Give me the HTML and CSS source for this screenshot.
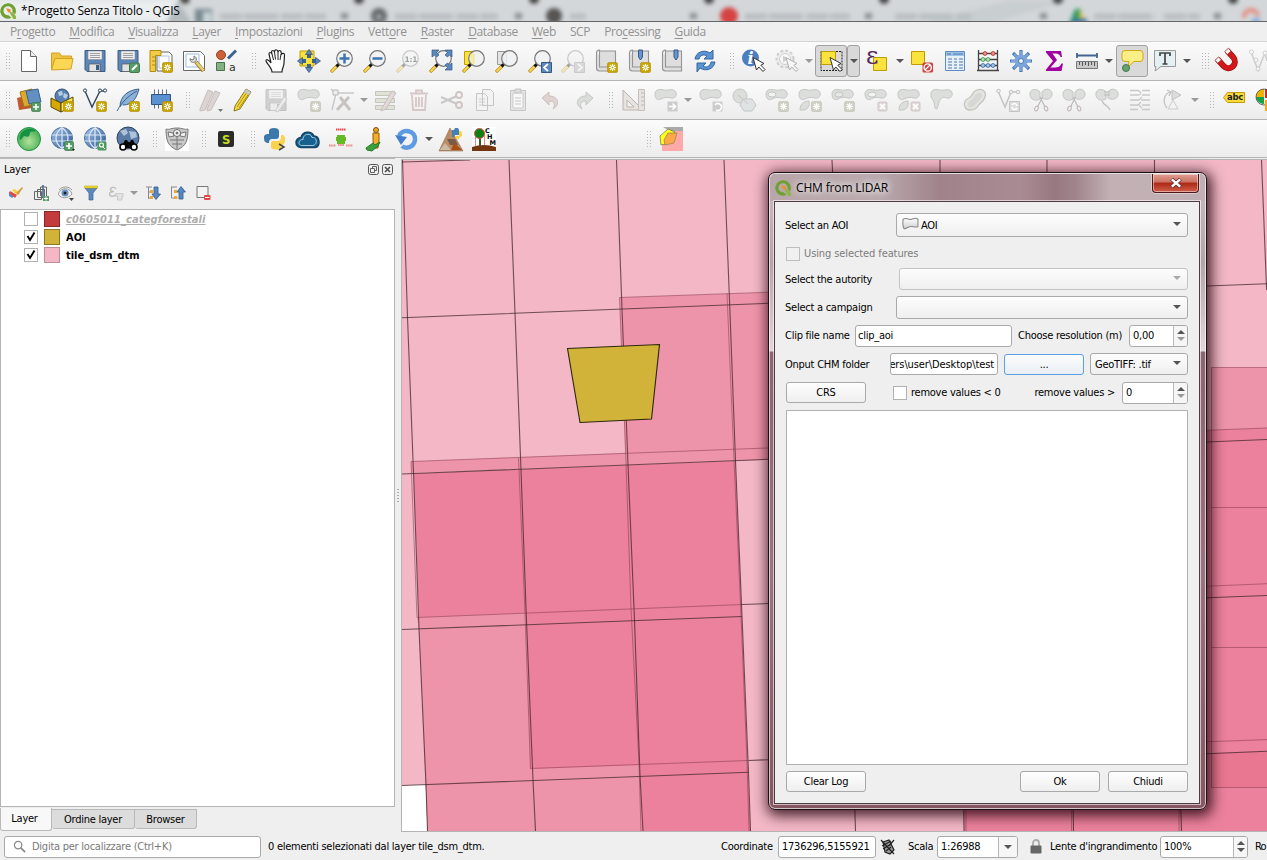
FILE: index.html
```html
<!DOCTYPE html>
<html lang="it">
<head>
<meta charset="utf-8">
<title>*Progetto Senza Titolo - QGIS</title>
<link rel="stylesheet" href="styles.css">
</head>
<body>
<svg class="defs" width="0" height="0">
  <defs>
    <linearGradient id="gsteel" x1="0" y1="0" x2="0" y2="1"><stop offset="0" stop-color="#fff"/><stop offset="1" stop-color="#cdd0d2"/></linearGradient>
    <linearGradient id="gglobe" x1="0" y1="0" x2="1" y2="1"><stop offset="0" stop-color="#a9c8ee"/><stop offset="1" stop-color="#28548e"/></linearGradient>
    <radialGradient id="gball" cx=".5" cy=".6"><stop offset="0" stop-color="#b2e29a"/><stop offset="1" stop-color="#54b35c"/></radialGradient>
    <symbol id="star" viewBox="0 0 24 24"><rect x="13.5" y="13.5" width="10" height="10" rx="1.5" fill="#caa400" stroke="#b08c00" stroke-width=".6"/><path d="M18.5 15v7M15 18.5h7M16 16l5 5M21 16l-5 5" stroke="#fff" stroke-width="1.1"/><circle cx="18.5" cy="18.5" r=".9" fill="#caa400"/></symbol>
    <symbol id="gstar" viewBox="0 0 24 24"><rect x="13.5" y="13.5" width="10" height="10" rx="1.5" fill="#d0cfc4" stroke="#c2c1b6" stroke-width=".6"/><path d="M18.5 15v7M15 18.5h7M16 16l5 5M21 16l-5 5" stroke="#fff" stroke-width="1.1"/></symbol>
    <symbol id="gx" viewBox="0 0 24 24"><rect x="14" y="14" width="9" height="9" rx="1" fill="#ddd4d4" stroke="#d2caca"/><path d="M16 16l5 5M21 16l-5 5" stroke="#fff" stroke-width="2"/></symbol>
    <symbol id="plus" viewBox="0 0 24 24"><rect x="14.5" y="14.5" width="9" height="9" rx="1.5" fill="#5a9c68" stroke="#3f7a4c" stroke-width=".7"/><path d="M19 16v6M16 19h6" stroke="#fff" stroke-width="1.6"/></symbol>
    <symbol id="lens" viewBox="0 0 24 24"><path d="M1 23l6.500-6.500" stroke="#b18716" stroke-width="3.200"/><path d="M1.500 22.500l5.500-5.500" stroke="#ffd74a" stroke-width="1.800"/><path d="M6.500 17.500l2.500-2.500" stroke="#111" stroke-width="3"/><circle cx="14.500" cy="9.500" r="7.800" fill="#eef1f2" fill-opacity=".85" stroke="#777" stroke-width="1.200"/></symbol>
    <symbol id="cursor" viewBox="0 0 24 24"><path d="M11 8.500l3.500 12.500 2.300-3 4.200 4.500 2-2-4.200-4.300 3.200-1.700z" fill="#fff" stroke="#333" stroke-width="1"/></symbol>
    <symbol id="blob" viewBox="0 0 24 24"><path d="M1 6C1 1 6 1 10 2s8-2 11 1c3 4 0 8-4 7s-6-1-10 1-6-1-6-5z" fill="#dcdedb" stroke="#c5c7c4"/></symbol>
    <symbol id="globe" viewBox="0 0 24 24"><circle cx="12" cy="11" r="10.500" fill="url(#gglobe)" stroke="#4c6f9c"/><path d="M2 8h20M2 14h20M12 .5v21M12 .5c-8 6-8 15 0 21M12 .5c8 6 8 15 0 21" fill="none" stroke="#dce9f7" stroke-width="1.200"/></symbol>
    <symbol id="flop" viewBox="0 0 24 24"><path d="M2 1.500h20v21H4l-2-2z" fill="#5d86b8" stroke="#3a5b85"/><path d="M5 2h14v8.500H5z" fill="#eee" stroke="#888" stroke-width=".5"/><path d="M7 4.500h10M7 6.500h10M7 8.500h10" stroke="#8a8a8a" stroke-width=".8"/><path d="M6 15h11v7.500H6z" fill="#e2e2e2" stroke="#555" stroke-width=".7"/><path d="M13 16h3v5h-3z" fill="#3a5b85"/></symbol>
    <symbol id="book" viewBox="0 0 24 24"><path d="M2.500 4c0-3 3-3 3-3v17h16V2H5.500M2.500 4v15c0 3 2 3 3 3h16v-4" fill="#dedede" stroke="#949494" stroke-width="1.100"/></symbol>
    <symbol id="scis" viewBox="0 0 24 24"><path d="M1 5c1-5 8-4 10-1v7c-5 3-11 0-10-6zM13 4c3-5 11-3 10 3-1 5-7 5-10 3z" fill="#dcdedb" stroke="#c5c7c4"/><path d="M13.500 9l-5 10M11 9l5 10" stroke="#bbb" stroke-width="1.200"/><ellipse cx="7.500" cy="20.500" rx="1.600" ry="2.500" transform="rotate(25 7.500 20.500)" fill="none" stroke="#bfb2b2"/><ellipse cx="17" cy="20.500" rx="1.600" ry="2.500" transform="rotate(-25 17 20.500)" fill="none" stroke="#bfb2b2"/></symbol>
    <symbol id="qlogo" viewBox="0 0 24 24"><path d="M12 .5a11.500 11.500 0 1 0 5 21.800l-4-4a6.800 6.800 0 1 1 5.600-5l4 4A11.500 11.500 0 0 0 12 .5z" fill="#6fa032"/><path d="M14 14h5l5 6v4h-4z" fill="#8cb73f"/><path d="M9 8l7 1.500v5L12 14z" fill="#ee8f2f"/></symbol>
  </defs>
</svg>

<div class="app">
  <header class="titlebar">
    <svg class="behind" viewBox="0 0 1267 21" preserveAspectRatio="none">
      <g class="soft">
        <path d="M185 0h335l8 3h10l8-3h721v24H175z" fill="#d3d7da"/>
        <path d="M920 24l90-24h60L990 24z" fill="#c9ced1"/>
        <path d="M178 0l14 24H166z" fill="#b4babd"/>
        <rect x="195" y="9" width="17" height="14" fill="#78898f"/><rect x="203" y="12" width="8" height="11" fill="#c9d6da"/>
        <path d="M220 16.500h106M395 16.500h103M570 16.500h16M745 16.500h105M895 16.500h76M1094 16.500h62M1164 16.500h36" stroke="#b9bec1" stroke-width="6" stroke-dasharray="22 2 34 3"/>
        <path d="M341 16h7M515 16h7M690 16h7M865 16h7M1040 16h7M1214 16h7" stroke="#8b8f91" stroke-width="6"/>
        <g fill="#444"><circle cx="185" cy="-1" r="5"/><circle cx="359" cy="-1" r="5"/><circle cx="534" cy="-1" r="5"/><circle cx="709" cy="-1" r="5"/><circle cx="884" cy="-1" r="5"/><circle cx="1058" cy="-1" r="5"/><circle cx="1233" cy="-1" r="5"/></g>
        <circle cx="379" cy="16" r="8" fill="#626769"/><circle cx="379" cy="17" r="3" fill="#aaa"/>
        <circle cx="554" cy="16" r="8" fill="#575454"/><circle cx="729" cy="16" r="9" fill="#d64343"/>
        <path d="M1069 24l6-15h6v15z" fill="#2d9a62"/><path d="M1079 9l9 15h-9z" fill="#d9b93e"/><path d="M1072 19h15v5h-15z" fill="#3d74b5"/>
        <path d="M1244 18a7 7 0 0 1 14-2" fill="none" stroke="#e6897b" stroke-width="4"/><path d="M1252 21h8" stroke="#7fa6dd" stroke-width="5"/>
      </g>
    </svg>
    <svg class="appicon" viewBox="0 0 24 24"><use href="#qlogo"/></svg>
    <span class="wtitle">*Progetto Senza Titolo - QGIS</span>
  </header>

  <nav class="menubar">
    <span>P<u>r</u>ogetto</span><span><u>M</u>odifica</span><span><u>V</u>isualizza</span><span><u>L</u>ayer</span><span><u>I</u>mpostazioni</span><span><u>P</u>lugins</span><span>Vett<u>o</u>re</span><span><u>R</u>aster</span><span><u>D</u>atabase</span><span><u>W</u>eb</span><span>SCP</span><span>Pro<u>c</u>essing</span><span><u>G</u>uida</span>
  </nav>

  <div class="toolbar">
    <i class="grip first"></i>
    <b class="ic"><svg viewBox="0 0 24 24"><path d="M4.500 1.500h9l6 6v15h-15z" fill="#fff" stroke="#666"/><path d="M13.500 1.500v6h6" fill="#eee" stroke="#666"/></svg></b>
    <b class="ic"><svg viewBox="0 0 24 24"><path d="M1.500 20V4h8l2 3h10v5" fill="#eec343" stroke="#d2a21f"/><path d="M1.500 21L5 9.500h18L21 20z" fill="#fcd756" stroke="#d2a21f"/></svg></b>
    <b class="ic"><svg viewBox="0 0 24 24"><use href="#flop"/></svg></b>
    <b class="ic"><svg viewBox="0 0 24 24"><use href="#flop"/><rect x="13.500" y="14" width="10" height="9.500" rx="1.500" fill="#5a9c68" stroke="#3f7a4c"/><path d="M16 21l5-5" stroke="#fff" stroke-width="2"/></svg></b>
    <b class="ic"><svg viewBox="0 0 24 24"><path d="M8 3h12l3 3v16H8z" fill="#fff" stroke="#666"/><path d="M10 7h10v12H10z" fill="none" stroke="#aac3e0"/><path d="M1 1.500h11v5H6.500v16H1z" fill="#f2cb42" stroke="#b18b12"/><path d="M3 8h3M3 12h3M3 16h3" stroke="#b18b12"/><use href="#star"/></svg></b>
    <b class="ic"><svg viewBox="0 0 24 24"><path d="M1.500 2.500h17l4 4v15h-21z" fill="#fff" stroke="#666"/><path d="M4 5h13v13H4z" fill="none" stroke="#9dbbe4"/><path d="M8 9.500c0 4 3 4.500 5 3.500s2-5-1-6v3l-2 1z" fill="#ddd" stroke="#777"/><path d="M14 13l7.500 9" stroke="#987c36" stroke-width="4"/><path d="M14.500 13.500l7 8" stroke="#e9d275" stroke-width="2.500"/></svg></b>
    <b class="ic"><svg viewBox="0 0 24 24"><circle cx="6" cy="6" r="4.500" fill="#cb6239" stroke="#9c441f"/><path d="M1.500 13.500h8v8h-8z" fill="#84b084" stroke="#46734a"/><path d="M13 9.500l8-8" stroke="#3e638f" stroke-width="3"/><text x="14" y="22" class="glyph-a">a</text></svg></b>
    <i class="grip"></i>
    <b class="ic"><svg viewBox="0 0 24 24"><path d="M8 23c0-4-5-8-6-11 0-2 2-2 5 2L5 5c0-2 2-2 3 0L7.500 3c0-2 2.500-2 3 0 0-3 3-3 3.500 0 .5-2 3-2 3 0l.5 2c1-1 3-1 3 1l-.5 8c0 4-2 5-2 9z" fill="#fff" stroke="#222" stroke-width="1.200"/><path d="M8 5l1.500 6M10.500 3l1 7.500M14 3v8M17 5l-1 6" stroke="#222" fill="none"/></svg></b>
    <b class="ic"><svg viewBox="0 0 24 24"><path d="M3 2h14v15H3z" fill="#f9e13b" stroke="#c19c00"/><path d="M12 3.500v17M3.500 12h17" stroke="#3f6391" stroke-width="4"/><path d="M12 .5l3.500 5h-7zM12 23.500l3.500-5h-7zM.5 12l5-3.500v7zM23.500 12l-5-3.500v7z" fill="#5b88bd" stroke="#36587f" stroke-width=".8"/><path d="M9 9h6v6H9z" fill="#f9e13b"/></svg></b>
    <b class="ic"><svg viewBox="0 0 24 24"><use href="#lens"/><path d="M14.500 4.500v10M9.500 9.500h10" stroke="#3f73b1" stroke-width="2.500"/></svg></b>
    <b class="ic"><svg viewBox="0 0 24 24"><use href="#lens"/><path d="M9.500 9.500h10" stroke="#3f73b1" stroke-width="2.500"/></svg></b>
    <b class="ic dim"><svg viewBox="0 0 24 24"><use href="#lens"/><text x="8.500" y="12.500" class="glyph-one">1:1</text></svg></b>
    <b class="ic"><svg viewBox="0 0 24 24"><use href="#lens"/><path d="M3 1h7L7.500 3.500 10 6 7.500 8 5.500 6 3 8zM23 1h-7l2.500 2.500L16 6l2.500 2 2-2L23 8zM23 21h-7l2.500-2.500L16 16l2.500-2 2 2 2.500-2z" fill="#5b88bd" stroke="#36587f" stroke-width=".7"/></svg></b>
    <b class="ic"><svg viewBox="0 0 24 24"><path d="M2.500 2.500h9v13h-9z" fill="#fbe23c" stroke="#c19c00"/><use href="#lens"/><path d="M8 5h5v10H10z" fill="#f5ea9b" opacity=".8"/></svg></b>
    <b class="ic"><svg viewBox="0 0 24 24"><path d="M2.500 2.500h9v13h-9z" fill="#e4e4e4" stroke="#999"/><use href="#lens"/></svg></b>
    <b class="ic"><svg viewBox="0 0 24 24"><use href="#lens"/><path d="M13.500 13.500h10v10h-10z" fill="#5b88bd" stroke="#36587f"/><path d="M20 15l-4 3.500 4 3.500" fill="none" stroke="#fff" stroke-width="1.800"/></svg></b>
    <b class="ic dim"><svg viewBox="0 0 24 24"><use href="#lens"/><path d="M13.500 13.500h10v10h-10z" fill="#aaa" stroke="#888"/><path d="M17 15l4 3.500-4 3.500" fill="none" stroke="#fff" stroke-width="1.800"/></svg></b>
    <b class="ic"><svg viewBox="0 0 24 24"><use href="#book"/><use href="#star"/></svg></b>
    <b class="ic"><svg viewBox="0 0 24 24"><use href="#book"/><path d="M11.500 1h4v7l-2 3-2-3z" fill="#6695cf" stroke="#3a5b85"/><use href="#star"/></svg></b>
    <b class="ic"><svg viewBox="0 0 24 24"><use href="#book"/><path d="M14 1h4v7l-2 3-2-3z" fill="#6695cf" stroke="#3a5b85"/></svg></b>
    <b class="ic"><svg viewBox="0 0 24 24"><path d="M2 10C3 3 11 0 17 4l3-3v9h-9l3-3C11 5 7 6 6 10zM22 13c-1 7-9 10-15 6l-3 4v-9h9l-3 3c3 2 7 1 8-4z" fill="#5c94d3" stroke="#3465a0"/></svg></b>
    <i class="grip g16"></i>
    <b class="ic"><svg viewBox="0 0 24 24"><circle cx="8.500" cy="9" r="8.500" fill="#4b7fc0"/><text x="5.500" y="15" class="glyph-i">i</text><use href="#cursor"/></svg></b>
    <b class="ic dim"><svg viewBox="0 0 24 24"><circle cx="10" cy="10" r="8.500" fill="#e2e2e2" stroke="#888" stroke-width="2" stroke-dasharray="3 2"/><circle cx="10" cy="10" r="5.500" fill="#fff" stroke="#888"/><path d="M8 6.500l5 3.500-5 3.500z" fill="#888"/><use href="#cursor"/></svg></b>
    <i class="arr dimarr"></i>
    <b class="ic pressed"><svg viewBox="0 0 24 24"><path d="M2 2.500h21v19H2z" fill="none" stroke="#222" stroke-dasharray="2 1"/><path d="M2.500 2.500h14v13h-14z" fill="#fbe23c" stroke="#c19c00"/><use href="#cursor"/></svg></b><i class="arr pressedarr"></i>
    <b class="ic w35"><svg viewBox="0 0 24 24"><path d="M7.500 8.500h13v13h-13z" fill="#fbe23c" stroke="#c19c00"/><text x="0" y="15" class="glyph-eps">ε</text></svg></b>
    <i class="arr a10"></i>
    <b class="ic"><svg viewBox="0 0 24 24"><path d="M1.500 2.500h13v13h-13z" fill="#fbe23c" stroke="#c19c00"/><rect x="12.500" y="13.500" width="10.500" height="10" rx="1.500" fill="#d33f3f"/><circle cx="17.700" cy="18.500" r="3.600" fill="none" stroke="#fff" stroke-width="1.400"/><path d="M15 21l5-5" stroke="#fff" stroke-width="1.200"/></svg></b>
    <b class="ic"><svg viewBox="0 0 24 24"><path d="M2.500 2.500h19v19h-19z" fill="#e8f0f8" stroke="#5b8cc4"/><path d="M3 3h18v4H3z" fill="#9fc3e6"/><path d="M4 5h4M10 5h10M5 10h4M5 13h4M5 16h4M5 19h4M11 10h3M11 13h3M11 16h3M11 19h3M16 10h4M16 13h4M16 16h4M16 19h4" stroke="#4a78ad"/></svg></b>
    <b class="ic"><svg viewBox="0 0 24 24"><path d="M2.500 1v20M21.500 1v20M1 21.500h22M2 4.500h20M2 10.500h20M2 16.500h20" fill="none" stroke="#444" stroke-width="1.300"/><g stroke-width=".8"><g fill="#ee8b83" stroke="#a8332b"><circle cx="9" cy="4.500" r="2"/><circle cx="17" cy="4.500" r="2"/></g><g fill="#a6e4ae" stroke="#3d9150"><circle cx="7" cy="10.500" r="2"/><circle cx="12" cy="10.500" r="2"/></g><g fill="#9cc2ea" stroke="#35699f"><circle cx="7" cy="16.500" r="2"/><circle cx="12" cy="16.500" r="2"/><circle cx="17" cy="16.500" r="2"/></g></g></svg></b>
    <b class="ic"><svg viewBox="0 0 24 24"><path d="M12 1v22M1 12h22M4 4l16 16M20 4L4 20" stroke="#4b7ab5" stroke-width="3.200"/><path d="M12 2v20M2 12h20M5 5l14 14M19 5L5 19" stroke="#7ba6d9" stroke-width="1.800"/><circle cx="12" cy="12" r="6.500" fill="#7ba6d9"/><circle cx="12" cy="12" r="2.500" fill="#f4f4f4" stroke="#4b7ab5"/></svg></b>
    <b class="ic"><svg viewBox="0 0 24 24"><path d="M4 2h15l1 6h-1.500c-1-3-2-3.500-8-3.500L15 11l-6.500 7.500c8 0 9 0 11-4H21L19.500 22H4v-1.500L11 12 4 3.500z" fill="#a0009d"/></svg></b>
    <b class="ic"><svg viewBox="0 0 24 24"><path d="M2 6.500h20M2 4v5M22 4v5" stroke="#44648e" stroke-width="1.800"/><path d="M1.500 12.500h21v7h-21z" fill="#c9c9cc" stroke="#777"/><path d="M4.500 13v3M7.500 13v4M10.500 13v3M13.500 13v4M16.500 13v3M19.500 13v4" stroke="#555"/></svg></b>
    <i class="arr"></i>
    <b class="ic pressed tip"><svg viewBox="0 0 24 24"><path d="M5 1.500h15q3 0 3 3v5q0 3-3 3h-6L8 18l1-5.500H5q-3 0-3-3v-5q0-3 3-3z" fill="#fbee86" stroke="#cbaa15"/><circle cx="6" cy="19" r="3.500" fill="#68a06f" stroke="#3f7a4c"/></svg></b>
    <b class="ic"><svg viewBox="0 0 24 24"><path d="M1.500 1.500h21v16H8L2 22l1-4.500H1.500z" fill="#e5f0f5" stroke="#999"/><path d="M7 7V4h10v3M12 4v11M9.500 15h5" fill="none" stroke="#444" stroke-width="1.700"/></svg></b>
    <i class="arr"></i><i class="grip g18"></i>
    <b class="ic"><svg viewBox="0 0 24 24"><g transform="rotate(-42 12 13)"><path d="M6 4v9a6.500 6.500 0 0 0 13 0V4" fill="none" stroke="#9a0a0c" stroke-width="6"/><path d="M6 4v9a6.500 6.500 0 0 0 13 0V4" fill="none" stroke="#d3171b" stroke-width="4.600"/><path d="M3.500 3h5v4h-5zM16.500 3h5v4h-5z" fill="#f5f5f5" stroke="#a33" stroke-width=".8"/></g></svg></b>
    <b class="ic dim"><svg viewBox="0 0 24 24"><path d="M2 3l7 18L16 4h7M16 4l2 8" fill="none" stroke="#888" stroke-width="1.600"/><g fill="#fff" stroke="#888"><circle cx="2.500" cy="3" r="2"/><circle cx="9" cy="20" r="2"/><circle cx="16" cy="4" r="2"/><circle cx="7" cy="11" r="2"/></g></svg></b>
  </div>

  <div class="toolbar">
    <i class="grip first"></i>
    <b class="ic"><svg viewBox="0 0 24 24"><path d="M0 10l12-3 3 13-13 2z" fill="#c1592f"/><path d="M3 4l12-3 4 15-12 3z" fill="#dca82d" stroke="#9e7513"/><path d="M9 3L21 1l3 13-12 2z" fill="#6290c3" stroke="#38618f"/><use href="#plus"/></svg></b>
    <b class="ic"><svg viewBox="0 0 24 24"><circle cx="12" cy="8" r="7" fill="#5582b3" stroke="#2d4c70"/><path d="M8 4l4-1 1 4-4 1zM14 5l4 2-2 4-3-2z" fill="#b8cee0"/><path d="M1 10l10 5v9L1 19z" fill="#d6a900" stroke="#554500"/><path d="M11 15l12-6v9l-12 6z" fill="#ffe656" stroke="#554500"/><use href="#star"/></svg></b>
    <b class="ic"><svg viewBox="0 0 24 24"><path d="M2 3l7 16L17 3h6" fill="none" stroke="#33475f" stroke-width="1.400"/><g fill="#fff" stroke="#33475f"><circle cx="2" cy="2.500" r="1.600"/><circle cx="17" cy="2.500" r="1.600"/><circle cx="22" cy="2.500" r="1.600"/></g><use href="#star"/></svg></b>
    <b class="ic"><svg viewBox="0 0 24 24"><path d="M4 19C4 8 12 2 23 1c-2 7-5 16-16 16" fill="#8bb1d9" stroke="#3f638d"/><path d="M1 23C6 14 12 8 21 3" stroke="#3f638d" fill="none"/><use href="#star"/></svg></b>
    <b class="ic"><svg viewBox="0 0 24 24"><path d="M5.500 1.500v19M9.500 1.500v19M13.500 1.500v19M17.500 1.500v19" stroke="#5a6f8c"/><path d="M2.500 6.500h19v10h-19z" fill="#5c91d1" stroke="#2d5587"/><use href="#star"/></svg></b>
    <i class="grip"></i>
    <b class="ic"><svg viewBox="0 0 24 24"><path d="M2 21l8-19 5 2-8 18-5 1zM9 21l8-18 5 2-9 17-4 1z" fill="#dbd4d2" stroke="#c7bfbd"/><path d="M20 21h5l-2.500 3z" fill="#777"/></svg></b>
    <b class="ic"><svg viewBox="0 0 24 24"><path d="M4 18L15 1l5 3L9 21l-6 2z" fill="#f4d73d" stroke="#8b7a24"/><path d="M6 19L17 2.500M8 20L19 4" stroke="#b19416"/><path d="M15 1l5 3-2 3-5-3z" fill="#c3c6ca"/></svg></b>
    <b class="ic faint"><svg viewBox="0 0 24 24"><use href="#flop"/><path d="M11 23l9-14 3 2-9 13z" fill="#ddd" stroke="#997777"/></svg></b>
    <b class="ic"><svg viewBox="0 0 24 24"><use href="#blob"/><use href="#gstar"/></svg></b>
    <b class="ic"><svg viewBox="0 0 24 24"><path d="M2 22L6 5h18M5 5L1 1" fill="none" stroke="#c9c9c9" stroke-width="1.500"/><path d="M3 2h5v5H3z" fill="#eee" stroke="#bbb"/><path d="M7 22L19 9M10 9l10 13" stroke="#c8c3c0" stroke-width="3"/></svg></b>
    <i class="arr dimarr a11"></i>
    <b class="ic"><svg viewBox="0 0 24 24"><path d="M1.500 3.500h19v4h-19zM1.500 10.500h19v4h-19zM1.500 17.500h19v4h-19z" fill="#e0e2d8" stroke="#c4c6bc"/><path d="M8 20L18 3l4 2-10 16-5 2z" fill="#e0d9d7" stroke="#c7bfbd"/></svg></b>
    <b class="ic"><svg viewBox="0 0 24 24"><path d="M3 5.500h18M9 5V2.500h6V5M5 7l1 15h12l1-15M9 9v10M12 9v10M15 9v10" fill="none" stroke="#d6c6c6" stroke-width="1.800"/></svg></b>
    <b class="ic"><svg viewBox="0 0 24 24"><path d="M1 9l16 7M1 15L17 8" stroke="#c8c8c8" stroke-width="2"/><g fill="none" stroke="#cfc3c3" stroke-width="1.800"><circle cx="19" cy="7" r="3"/><circle cx="19" cy="17" r="3"/></g></svg></b>
    <b class="ic"><svg viewBox="0 0 24 24"><path d="M9.500 1.500h8l3 3v13h-11zM3.500 5.500h8l3 3v14h-11z" fill="#f3f3f3" stroke="#c5c5c5"/><path d="M6 11h6M6 14h6M6 17h6" stroke="#ccc"/></svg></b>
    <b class="ic"><svg viewBox="0 0 24 24"><path d="M4.500 2.500h15v20h-15z" fill="#e5e5e5" stroke="#c5c5c5"/><path d="M7 5h10v15H7z" fill="#f8f8f8" stroke="#ccc"/><path d="M9 1h6v4H9zM9 10h6M9 13h6M9 16h6" stroke="#c5c5c5" fill="#ddd"/></svg></b>
    <b class="ic"><svg viewBox="0 0 24 24"><path d="M3 10l7-6v4c9 0 12 8 4 13 3-5 1-8-4-8v4z" fill="#ded3d1" stroke="#ccc0be"/></svg></b>
    <b class="ic"><svg viewBox="0 0 24 24"><path d="M21 10l-7-6v4c-9 0-12 8-4 13-3-5-1-8 4-8v4z" fill="#d9dcd9" stroke="#c6c9c6"/></svg></b>
    <i class="grip g16"></i>
    <b class="ic"><svg viewBox="0 0 24 24"><path d="M2 2v20h20zM6 12v7h7z" fill="#e7e3e1" fill-rule="evenodd" stroke="#bcb4b0"/><path d="M17.500 1.500h6v21h-6z" fill="#e7e3e1" stroke="#c6beba"/><path d="M20 5h3M20 9h3M20 13h3M20 17h3" stroke="#bbb"/></svg></b>
    <b class="ic"><svg viewBox="0 0 24 24"><use href="#blob"/><path d="M13.500 13.500h10v10h-10z" fill="#ccc"/><path d="M15 18.500h6M18.500 15.500l3 3-3 3" stroke="#fff" stroke-width="1.600" fill="none"/></svg></b>
    <i class="arr dimarr"></i>
    <b class="ic"><svg viewBox="0 0 24 24"><use href="#blob"/><path d="M13.500 13.500h10v10h-10z" fill="#ccc"/><path d="M16 17a3.500 3.500 0 1 1 1 5" stroke="#fff" stroke-width="1.600" fill="none"/></svg></b>
    <b class="ic"><svg viewBox="0 0 24 24"><circle cx="8" cy="8" r="7" fill="#dcdedb" stroke="#c5c7c4"/><path d="M11 11h9l4 6-4 6h-8l-4-6z" fill="#dfe2e2" stroke="#c2c6c6"/><path d="M6 7l10 9" stroke="#c5c5c5"/></svg></b>
    <b class="ic"><svg viewBox="0 0 24 24"><use href="#blob"/><ellipse cx="7" cy="6.500" rx="4" ry="2.500" fill="#f3f3f3" stroke="#c5c5c5"/><use href="#gstar"/></svg></b>
    <b class="ic"><svg viewBox="0 0 24 24"><use href="#blob"/><path d="M2 22c0-6 4-9 9-9 1 5-1 10-9 9z" fill="#dcdedb" stroke="#c5c7c4"/><use href="#gstar"/></svg></b>
    <b class="ic"><svg viewBox="0 0 24 24"><use href="#blob"/><ellipse cx="8" cy="6.500" rx="4" ry="2.500" fill="#e6e6e6" stroke="#c5c5c5"/><use href="#gstar"/></svg></b>
    <b class="ic"><svg viewBox="0 0 24 24"><use href="#blob"/><ellipse cx="8" cy="6.500" rx="4" ry="2.500" fill="#f3f3f3" stroke="#c5c5c5"/><use href="#gx"/></svg></b>
    <b class="ic"><svg viewBox="0 0 24 24"><use href="#blob"/><path d="M2 22c0-6 4-9 9-9 1 5-1 10-9 9z" fill="#dcdedb" stroke="#c5c7c4"/><use href="#gx"/></svg></b>
    <b class="ic"><svg viewBox="0 0 24 24"><path d="M1 6C1 1 6 1 10 2s8-2 11 1c3 4 0 8-4 7s-5-1-7 2-2 10-4 9-1-6-3-9-2-3-2-6z" fill="#dcdedb" stroke="#c5c7c4"/></svg></b>
    <b class="ic"><svg viewBox="0 0 24 24"><path d="M12 3c6-4 12 0 10 6s-5 5-7 9-11 6-13 1 1-8 4-9 3-5 6-7z" fill="#e4e5e0" stroke="#c3c5be" stroke-width="1.300"/><path d="M13 6c4-3 7 0 6 3s-5 5-7 8-6 3-7 1 0-4 3-6 3-4 5-6z" fill="#d6d8d5"/></svg></b>
    <b class="ic"><svg viewBox="0 0 24 24"><path d="M2 3l7 16L15 4h7" fill="none" stroke="#c4c4c4" stroke-width="1.500"/><g fill="#eee" stroke="#c4c4c4"><circle cx="2.500" cy="3" r="1.800"/><circle cx="15" cy="4" r="1.800"/><circle cx="22" cy="4" r="1.800"/></g><path d="M13.500 13.500h10v10h-10z" fill="#ddd" stroke="#c4c4c4"/><path d="M16 17c2-3 5-1 5 1M21 20c-2 3-5 1-5-1" fill="none" stroke="#fff" stroke-width="1.500"/></svg></b>
    <b class="ic"><svg viewBox="0 0 24 24"><use href="#scis"/></svg></b>
    <b class="ic"><svg viewBox="0 0 24 24"><use href="#scis"/></svg></b>
    <b class="ic"><svg viewBox="0 0 24 24"><path d="M1 5c1-5 8-4 10-1v7c-5 3-11 0-10-6zM13 4c3-5 11-3 10 3-1 5-7 5-10 3z" fill="#dcdedb" stroke="#c5c7c4"/><path d="M9 4h6M9 7h6M7 13c2 5 6 4 8 9" fill="none" stroke="#bbb" stroke-width="1.200"/></svg></b>
    <b class="ic"><svg viewBox="0 0 24 24"><path d="M2 2.500h8M14 2.500h8M2 7h8l3-1M14 7h8M2 12h9M13 12h9M2 17h8M14 17h8M2 21.500h8M14 21.500h8M10 2l3 3M14 9l-3 3M10 17l3-3M14 20l-3-3" stroke="#c8c8c8" stroke-width="1.300" fill="none"/></svg></b>
    <b class="ic"><svg viewBox="0 0 24 24"><path d="M6 20C1 14 3 6 9 4M6 2l4 2-2 4" fill="none" stroke="#c2c2c2" stroke-width="1.300"/><path d="M11 2l9 5-9 5z" fill="#ddd" stroke="#c2c2c2"/><path d="M12 12l5 9H7z" fill="#f2f2f2" stroke="#ccc"/></svg></b>
    <i class="arr dimarr"></i><i class="grip g16"></i>
    <b class="ic"><svg viewBox="0 0 24 24"><path d="M1.500 9.500l4-5h17v10h-17z" fill="#f9dc3c" stroke="#c59c10"/><text x="5" y="12" class="glyph-abc">abc</text></svg></b>
    <b class="ic"><svg viewBox="0 0 24 24"><path d="M9 9V1a8 8 0 0 0-8 8z" fill="#f0b400"/><path d="M9 9H1a8 8 0 0 0 8 7z" fill="#16a249"/><path d="M10 1h8v9h-8z" fill="#d62424"/><path d="M1 9a8 8 0 0 1 16 0 8 8 0 0 1-16 0z" fill="none" stroke="#333" stroke-width=".7"/><path d="M10 12h8v11h-8z" fill="#f7a51c"/></svg></b>
  </div>

  <div class="toolbar third">
    <i class="grip first"></i>
    <b class="ic"><svg viewBox="0 0 24 24"><circle cx="12" cy="12" r="11.500" fill="url(#gball)" stroke="#1b9447"/><path d="M3 13C1 5 10-1 18 3c2 2-3 1-5 2 0 4-2 6-5 4-3 0-2 3-5 4z" fill="#159142"/></svg></b>
    <b class="ic"><svg viewBox="0 0 24 24"><use href="#globe"/><use href="#plus"/><path d="M22 22h3l-1.500 2z" fill="#222"/></svg></b>
    <b class="ic"><svg viewBox="0 0 24 24"><use href="#globe"/><rect x="14.500" y="14.500" width="9" height="9" rx="1.500" fill="#4e995d"/><circle cx="18.500" cy="18" r="2" fill="none" stroke="#fff" stroke-width="1.200"/><path d="M20 20l2 2" stroke="#fff"/></svg></b>
    <b class="ic"><svg viewBox="0 0 24 24"><circle cx="12" cy="11" r="11" fill="#5b7ba6" stroke="#2f4563"/><path d="M4 4l6-2 2 4-4 3zM13 4l7 1 1 5-6 2z" fill="#aec2da"/><path d="M5 21L9 13h2l1 2h2l1-2h2l4 8z" fill="#050505"/><circle cx="7" cy="20" r="3" fill="#fff" stroke="#000" stroke-width="1.600"/><circle cx="18" cy="20" r="3" fill="#fff" stroke="#000" stroke-width="1.600"/></svg></b>
    <i class="grip"></i>
    <b class="ic"><svg viewBox="0 0 24 24"><path d="M0 0h24v24H0z" fill="#fff"/><path d="M1 2c4 1 5-1 11-1s7 2 11 1c0 12-2 17-11 21C3 19 1 14 1 2z" fill="#c9c9c9" stroke="#777"/><path d="M3 5l5 1 1 3-5 1zM21 5l-5 1-1 3 5 1zM5 13h14M7 17h10M12 10v12" fill="#eee" stroke="#777"/><circle cx="12" cy="6" r="3.500" fill="#fff" stroke="#666"/><circle cx="12" cy="6" r="1.500" fill="#777"/></svg></b>
    <i class="grip g16"></i>
    <b class="ic"><svg viewBox="0 0 24 24"><rect x="4" y="4" width="16" height="16" rx="2" fill="#2a2b2c"/><text x="8" y="17" class="glyph-s">S</text></svg></b>
    <i class="grip"></i>
    <b class="ic"><svg viewBox="0 0 24 24"><path d="M6 7V4c0-2 2-3 5-3s5 1 5 3v5c0 2-1 3-3 3H9c-2 0-3 1-3 4-4 0-5-2-5-5s1-4 5-4z" fill="#3b78ab"/><path d="M8 17c0-3 1-3 3-3h4c2 0 3-1 3-4V8c4 0 4 2 4 5s-1 5-4 5v3c-3 2-7 2-10 0z" fill="#fad34a"/><path d="M16 17l5 3-5 3" fill="none" stroke="#444" stroke-width="1.500"/></svg></b>
    <b class="ic"><svg viewBox="0 0 24 24"><path d="M5 20.500a5 5 0 0 1 0-10A7 7 0 0 1 18 9c6 0 7 11 1 11.500z" fill="#17618f" stroke="#114565" stroke-width="1.500"/><path d="M5.500 18.500c-4-1-3-6 1.500-6 0-6 8-7 9-2 5-1 6 7 1 8z" fill="none" stroke="#cbe4f1" stroke-width=".8"/></svg></b>
    <b class="ic"><svg viewBox="0 0 24 24"><path d="M8 8h8v2h1v4h-1v3H8v-3H7v-4h1z" fill="#63ba24"/><path d="M7 2.500h10" stroke="#e44" stroke-width="2.200" stroke-dasharray="1.500 .5"/><path d="M0 18.500h7M9 18h6M17 18.500h7" stroke="#e78888" stroke-width="2" stroke-dasharray="1.500 .7"/></svg></b>
    <b class="ic"><svg viewBox="0 0 24 24"><circle cx="14" cy="3" r="2.500" fill="#f0a01d" stroke="#7b5213"/><path d="M11 6h6v7l-1 8h-4l-1-8z" fill="#f5ad24" stroke="#8d5d0d"/><path d="M4 21l7-5 2 2 5-3-2 4-6 5-5-1z" fill="#3ba13d" stroke="#207c26"/></svg></b>
    <b class="ic"><svg viewBox="0 0 24 24"><path d="M4 9C7 1 21 3 20 13c-1 8-10 9-13 6" fill="none" stroke="#5e9be2" stroke-width="4.500"/><path d="M0 8l12 2-6 8z" fill="#447fcf"/></svg></b>
    <i class="arr a11"></i>
    <b class="ic"><svg viewBox="0 0 24 24"><path d="M11 1L0 24h24z" fill="#bb8b63" stroke="#846147" stroke-width=".5"/><path d="M8 12h8l3 6h-8z" fill="#785b4b"/><path d="M1 23l5-7 6 7z" fill="#cbbca5"/><path d="M12 23l3-7 8 7z" fill="#a84e17"/><path d="M13 3h2l1-2h3l1 2v5h-4l-1 2h-2z" fill="#4282b7"/><path d="M20 4h2l1 2v3l-2 1-1 2h-3l-1-3h4z" fill="#fad34a"/></svg></b>
    <b class="ic"><svg viewBox="0 0 24 24"><path d="M0 0h24v24H0z" fill="#fff"/><path d="M3.500 5v15M12.500 5v15" stroke="#e98d8d"/><path d="M7 8h2v12H7z" fill="#3f5a1e"/><circle cx="7.500" cy="6.500" r="5" fill="#118012" stroke="#d55"/><path d="M0 24v-4q12-4 24 0v4z" fill="#743511"/><text x="13" y="6" class="glyph-chm">C</text><text x="15" y="12" class="glyph-chm">H</text><text x="17.500" y="18" class="glyph-chm">M</text></svg></b>
    <i class="grip wide"></i>
    <b class="ic"><svg viewBox="0 0 24 24"><path d="M4 0h20v6H14z" fill="#aaa"/><path d="M3 24V14L14 4h10v20z" fill="#ffa9a9"/><path d="M1 9l8-7 7 3-9 12-5 1z" fill="#ffff1a" stroke="#555" stroke-width=".6"/><path d="M5 13l4-7 9 0-3 10-9 2z" fill="#ffa54a" stroke="#884" stroke-width=".7"/></svg></b>
  </div>

  <main class="work">
    <aside class="dock">
      <div class="dockhead"><span>Layer</span>
        <svg width="26" height="12" viewBox="0 0 26 12"><g fill="none" stroke="#555"><rect x=".5" y=".5" width="10" height="10" rx="2"/><rect x="14.500" y=".5" width="10" height="10" rx="2"/><path d="M4.500 4.500v-2h4v4h-2M2.500 4.500h4v4h-4z" stroke-width=".9"/><path d="M17 3l5 5M22 3l-5 5" stroke-width="1.700"/></g></svg>
      </div>
      <div class="docktools">
        <b><svg viewBox="0 0 16 16"><path d="M1 7l6 3-3 3-3-2z" fill="#4d8fd6"/><path d="M2 6l7 4-2 3-6-5z" fill="#e24b3f"/><path d="M4 5l5 5 3-1-5-5z" fill="#f5d142"/><path d="M8 8l6-6 1 1-5 7z" fill="#d89d42"/></svg></b>
        <b><svg viewBox="0 0 16 16"><path d="M1.500 6.500h7v8h-7zM4.500 4.500h7v8h-7z" fill="#eee" stroke="#666"/><path d="M7.500 11V2h6v9" fill="none" stroke="#666"/><path d="M10 0v12" stroke="#3a6591" stroke-width="1.500"/><path d="M10 11h6v5h-6z" fill="#5a9c68"/><path d="M13 11.500v4M11 13.500h4" stroke="#fff"/></svg></b>
        <b><svg viewBox="0 0 16 16"><path d="M0 9c3-7 12-7 14 0-4 5-11 5-14 0z" fill="#f3f3f3" stroke="#999"/><circle cx="7" cy="8" r="3.500" fill="#6590c5"/><circle cx="7" cy="8" r="1.500" fill="#222"/><path d="M1 5c3-4 10-4 13 0" fill="none" stroke="#999"/><path d="M11 13h5l-2.500 3z" fill="#444"/></svg></b>
        <b><svg viewBox="0 0 16 16"><path d="M2 3h12l-4 5v7H6V8z" fill="#5d88bd" stroke="#3b618f" stroke-width=".7"/><path d="M1.500 1h13v2h-13z" fill="#f5dd35" stroke="#c4a719" stroke-width=".6"/></svg></b>
        <b class="dim"><svg viewBox="0 0 16 16"><path d="M8 4c-1-2.500-5.500-2-5.500.5C2.500 6 4 6.500 6 6.500 3 6.500 1.500 7.500 1.500 9c0 3 5.500 3 6.500 0" fill="none" stroke="#666" stroke-width="1.400"/><path d="M8 8.500h7v3h-1V15h-4.500v-3.500H8z" fill="#ccc" stroke="#888"/></svg></b>
        <i class="arr dimarr"></i>
        <b><svg viewBox="0 0 16 16"><path d="M1 2h6M3.500 2v12M3.500 7h4M3.500 13h4" stroke="#888" fill="none"/><path d="M5 5h3v3H5zM5 11h3v3H5z" fill="#f3a432"/><path d="M9 2h4v7h2.500L11 14.500 7 9h2z" fill="#5488c3" stroke="#345d8c" stroke-width=".8"/></svg></b>
        <b><svg viewBox="0 0 16 16"><path d="M1 2h6M1.500 2v11M1.500 13h6" stroke="#888" fill="none"/><path d="M4 5h3v3H4zM4 11h3v3H4z" fill="#f3a432"/><path d="M9 14h4V7h2.500L11 1.500 7 7h2z" fill="#5488c3" stroke="#345d8c" stroke-width=".8"/></svg></b>
        <b><svg viewBox="0 0 16 16"><path d="M2 1.500h11v11H2z" fill="#f3f3f3" stroke="#777"/><rect x="9" y="10" width="6.500" height="5" rx="1" fill="#e64848"/><path d="M10 12.500h4.500" stroke="#fff"/></svg></b>
      </div>
      <ul class="tree">
        <li><i class="cb"></i><i class="sw red"></i><span class="off">c0605011_categforestali</span></li>
        <li><i class="cb"><svg viewBox="0 0 12 12"><path d="M2.500 5l2.500 4 4.500-7.500" fill="none" stroke="#000" stroke-width="1.900"/></svg></i><i class="sw gold"></i><span>AOI</span></li>
        <li><i class="cb"><svg viewBox="0 0 12 12"><path d="M2.500 5l2.500 4 4.500-7.500" fill="none" stroke="#000" stroke-width="1.900"/></svg></i><i class="sw pink"></i><span>tile_dsm_dtm</span></li>
      </ul>
      <div class="tabs"><span class="on">Layer</span><span>Ordine layer</span><span>Browser</span></div>
    </aside>
    <div class="splitter"><i></i></div>
    <section class="map">
      <svg viewBox="402 160 865 671" width="865" height="671">
        <path d="M402 160h865v671H402z" fill="#f3b7c6"/>
        <path d="M402 785.500L426 784.500L427.500 831H402z" fill="#fff"/>
        <path d="M619.500 297.500L775 292V459.500L735.500 461 411 473V461.500L625 453z" fill="#ee94aa"/>
        <path d="M413.500 473.500L735.500 461 750.500 831H427.500z" fill="#eb819c"/>
        <path d="M417 617.500L525 613 526.600 624 530 769 640 765V776L643 831H427.500L419 629z" fill="#ee94aa"/>
        <path d="M964 800h303v31H964z" fill="#eb819c"/>
        <path d="M1211.500 367.500h56v64h-56z" fill="#ee94aa"/>
        <path d="M1200 430.500l67-2.500v403h-67z" fill="#eb819c"/>
        <path d="M1211.500 753l56-2v36h-56z" fill="#e97791"/>
        <g fill="none" stroke="#3c2228" stroke-opacity=".72" stroke-width="1.100">
          <path d="M402.500 160L407.500 317 413.500 473 419 629 426 785 427.500 831M509 160L515 313 521 470 526.600 624 533 780 535.500 831M616.500 160L622 309 628 465 634.500 620 640 776 643 831M724 160L729.700 305 735.500 461 742 616 748.500 772 750.500 831M832 160L833 180M940 160v20M1047 160v20M1154.500 160v20M1261.500 160L1266.600 290"/>
          <path d="M402 162L470 160M402 317.700L775 303M402 474L775 459M402 629.500L742 616.500M742 604.500L775 603.300M402 785.500L748.500 772.200M748.500 760.500L775 759.500M1200 286.300L1267 283.800M1200 442.300L1267 439.500M1200 598L1267 595.500M1200 754L1267 751.300"/>
          <path d="M854.500 800l1 31M963.500 800l.5 31M1073 800l.5 31M1180.500 800l1 31"/>
        </g>
        <g fill="none" stroke="#7d3347" stroke-opacity=".5">
          <path d="M775 292L619.500 297.500 625.700 453 631 608 639 764 641 831M727 293.500L733.500 449 740.500 604 747 762 749 831M775 447.700L411 461.500 417 617.500 742 604.500M518.500 458L525 613 530.500 768.500 748 760.500"/>
          <path d="M1267 367.500h-55.500V787.500H1267M1211.500 507.500H1267M1211.500 647.500H1267M1200 430.500L1267 428M1200 586.500L1267 583.700M1200 742L1267 739.600M966 800v31M1071.500 800v31M1179 800v31"/>
        </g>
        <path d="M567.500 348.500L659.500 344.500 651.500 419 580 422.500z" fill="#d2b33a" stroke="#2c260d" stroke-width="1.100"/>
      </svg>
    </section>
  </main>

  <footer class="status">
    <label class="find"><svg viewBox="0 0 14 14"><circle cx="5.500" cy="5.500" r="4" fill="none" stroke="#888" stroke-width="1.300"/><path d="M8.500 8.500l4.500 4.500" stroke="#888" stroke-width="1.800"/></svg><span>Digita per localizzare (Ctrl+K)</span></label>
    <span class="msg">0 elementi selezionati dal layer tile_dsm_dtm.</span>
    <span class="coord">Coordinate</span><span class="field cval">1736296,5155921</span>
    <svg class="mouse" viewBox="0 0 16 16"><path d="M3 3l6-2 5 10-4 4-5-2z" fill="#999" stroke="#222" stroke-width="1.200"/><path d="M1 1l13 14M2 7l9-5M3 10l8-5M9 7l5-6M6 12l5-4" stroke="#222" stroke-width="1.200"/></svg>
    <span class="scala">Scala</span><span class="field sval">1:26988<i><em class="tri"></em></i></span>
    <svg class="lock" viewBox="0 0 12 15"><path d="M3 7V4a3 3 0 0 1 6 0v3" fill="none" stroke="#aaa" stroke-width="1.800"/><rect x=".5" y="6.500" width="11" height="8" rx="1" fill="#666"/></svg>
    <span class="lente">Lente d'ingrandimento</span><span class="field spin zval">100%<i><em class="up"></em><em class="tri"></em></i></span>
    <span class="rot">Ro</span>
  </footer>
</div>

<section class="dialog">
  <div class="dtitle"><svg viewBox="0 0 24 24"><use href="#qlogo"/></svg><span>CHM from LIDAR</span><button class="close"><svg viewBox="0 0 12 10"><path d="M1.500 1l9 8M10.500 1l-9 8" stroke="#66363a" stroke-width="4"/><path d="M1.800 1.300l8.400 7.400M10.200 1.300L1.800 8.700" stroke="#fff" stroke-width="2.400"/></svg></button></div>
  <div class="client">
    <div class="row r24"><span class="lab l1">Select an AOI</span><span class="combo grow"><svg viewBox="0 0 16 12"><path d="M1 2c4-2 5 1 8 0s4-2 6 0v7c-4 1-5-1-8 0s-3 2-5 2c-2-3-1-6-1-9z" fill="url(#gsteel)" stroke="#888"/></svg>AOI<em class="tri"></em></span></div>
    <div class="row r18"><i class="cb off"></i><span class="grey">Using selected features</span></div>
    <div class="row r6"><span class="lab l2">Select the autority</span><span class="combo grow disabled"><em class="tri"></em></span></div>
    <div class="row r23"><span class="lab l1">Select a campaign</span><span class="combo grow"><em class="tri"></em></span></div>
    <div class="row"><span class="lab l3">Clip file name</span><span class="field w157">clip_aoi</span><span class="lab res">Choose resolution (m)</span><span class="field spin w59">0,00<i><em class="up"></em><em class="tri pale"></em></i></span></div>
    <div class="row"><span class="lab l4">Onput CHM folder</span><span class="field path"><span>ers\user\Desktop\test</span></span><button class="btn focus">...</button><span class="combo fmt">GeoTIFF: .tif<em class="tri"></em></span></div>
    <div class="row"><button class="btn">CRS</button><i class="cb c2"></i><span>remove values &lt; 0</span><span class="rem">remove values &gt;</span><span class="field spin w66">0<i><em class="up"></em><em class="tri pale"></em></i></span></div>
    <div class="log"></div>
    <div class="row foot"><button class="btn">Clear Log</button><button class="btn push">Ok</button><button class="btn gap8">Chiudi</button></div>
  </div>
</section>
</body>
</html>
```

FILE: styles.css
```css
* { box-sizing: border-box; }
html, body { margin: 0; height: 100%; overflow: hidden; }
body { position: relative; width: 1267px; height: 860px; background: #efefef; color: #000; font: 11px "DejaVu Sans Condensed", "DejaVu Sans", sans-serif; letter-spacing: -0.25px; white-space: nowrap; }
i, em { font-style: normal; }
.defs { position: absolute; }
.app { display: flex; flex-direction: column; height: 860px; width: 1267px; overflow: hidden; }

/* title bar: glass with the blurred browser tabs behind */
.titlebar { position: relative; z-index: 0; height: 22px; flex: none; background: #d5d8da; border-bottom: 1px solid #636567; display: flex; align-items: center; overflow: hidden; }
.behind { position: absolute; left: 0; top: 0; width: 1267px; height: 21px; }
.soft { filter: blur(2.2px); }
.appicon { position: relative; width: 16px; height: 16px; }
.wtitle { position: relative; margin-left: 5px; font: 12px "Open Sans", "Noto Sans", sans-serif; letter-spacing: -0.17px; padding-right: 6px; }
.wtitle::before { content: ""; position: absolute; z-index: -1; left: -26px; right: -4px; top: -4px; bottom: -4px; background: #eceff0; filter: blur(4px); }

.menubar { height: 20px; flex: none; display: flex; gap: 14px; padding: 2px 0 0 10px; color: #929292; font: 12px/16px "Open Sans", "Noto Sans", sans-serif; letter-spacing: -0.38px; border-bottom: 1px solid #d4d4d4; }
.menubar u { text-underline-offset: 2px; }

.toolbar { height: 39px; flex: none; display: flex; align-items: center; background: linear-gradient(#fbfbfb, #ececec); border-bottom: 1px solid #b4b4b4; overflow: hidden; }
.toolbar.third { height: 38px; }
.ic { width: 33px; height: 32px; flex: none; display: flex; align-items: center; justify-content: center; }
.ic svg { width: 24px; height: 24px; overflow: visible; }
.w35 { width: 35px; }
.dim { opacity: .35; }
.faint { opacity: .3; filter: grayscale(.9); }
.pressed { width: 32px; background: #d9d9d9; border: 1px solid #a2a2a2; border-radius: 3px; }
.tip { margin-left: 1px; }
.grip { flex: none; width: 16px; height: 18px; background: radial-gradient(circle, #b5b5b5 .6px, transparent .9px) 8px 0 / 3px 3px; background-clip: content-box; padding: 0 2px 0 8px; }
.grip.first { width: 12px; padding: 0 2px 0 5px; background-position: 5px 0; }
.g16 { width: 16px; }
.g18 { width: 18px; }
.grip.wide { width: 154px; padding: 0 3px 0 145px; }
.arr { flex: none; width: 12px; display: flex; justify-content: center; }
.arr::after, .tri { content: ""; border: 4px solid transparent; border-top: 4px solid #555; border-bottom: 0; }
.dimarr::after { border-top-color: #999; }
.a10 { width: 10px; } .a11 { width: 11px; }
.pressedarr { width: 13px; height: 32px; align-items: center; background: #d9d9d9; border: 1px solid #a2a2a2; border-radius: 3px; }
.glyph-a { font: 11px "DejaVu Sans"; fill: #333; }
.glyph-one { font: bold 7.500px "DejaVu Sans"; }
.glyph-i { font: italic bold 16px "DejaVu Serif"; fill: #fff; }
.glyph-eps { font: 24px "DejaVu Serif"; fill: #54265c; }
.glyph-abc { font: bold 8.500px "DejaVu Sans"; fill: #222; letter-spacing: -0.3px; }
.glyph-s { font: bold 13px "DejaVu Sans Condensed"; fill: #c5df20; }
.glyph-chm { font: bold 6.500px "DejaVu Sans"; }

.work { flex: 1; display: flex; min-height: 0; }
.dock { width: 395px; display: flex; flex-direction: column; border-top: 1px solid #b9b9b9; }
.dockhead { height: 21px; display: flex; align-items: center; justify-content: space-between; padding: 0 1px 0 4px; }
.docktools { height: 29px; display: flex; align-items: center; padding: 0 0 4px 3px; }
.docktools b { width: 25px; display: flex; justify-content: center; }
.docktools svg { width: 16px; height: 16px; }
.docktools .arr { width: 11px; margin: 0 1px 0 0; }
.tree { flex: 1; margin: 0; padding: 0 0 0 23px; list-style: none; background: #fff; border: 1px solid #b4b4b4; font-weight: bold; letter-spacing: 0; }
.tree li { height: 18px; display: flex; align-items: center; }
.cb { width: 14px; height: 14px; border: 1px solid #b1b1b1; background: #fff; flex: none; }
.cb svg { width: 12px; height: 12px; display: block; }
.cb.off { background: #f0f0f0; border-color: #bdbdbd; }
.sw { width: 16px; height: 16px; margin: 0 6px; border: 1px solid #8d7826; }
.red { background: #c43b3b; border-color: #852828; } .gold { background: #d2b33a; } .pink { background: #f3b7c6; border-color: #bd8c98; }
.tree .off { color: #adadad; font-style: italic; text-decoration: underline; letter-spacing: 0.12px; }
.tabs { height: 25px; display: flex; align-items: flex-start; border-top: 1px solid #efefef; }
.tabs span { height: 20px; line-height: 19px; margin-top: 1px; background: #dcdcdc; border: 1px solid #b9b9b9; border-left: 0; border-radius: 0 0 3px 3px; text-align: center; width: 62px; }
.tabs span:nth-child(2) { width: 83px; }
.tabs .on { width: 52px; height: 23px; line-height: 22px; margin-top: 0; background: #f8f8f8; border-left: 1px solid #b9b9b9; border-top: 0; padding-right: 3px; }
.splitter { width: 6px; display: flex; align-items: center; justify-content: center; }
.splitter i { width: 2px; height: 14px; background: radial-gradient(circle, #aaa .6px, transparent .9px) 0 0 / 2px 3px; }
.map { width: 866px; border: 1px solid #b4b4b4; border-right: 0; overflow: hidden; margin-top: 1px; }
.map svg { display: block; }

.status { height: 28px; flex: none; display: flex; align-items: center; padding: 1px 0 0 4px; overflow: hidden; }
.status > * { flex: none; }
.find { width: 257px; height: 22px; border: 1px solid #a9a9a9; border-radius: 3px; background: #fff; display: flex; align-items: center; color: #7a7a7a; padding-left: 8px; gap: 6px; }
.find svg { width: 13px; height: 13px; }
.msg { width: 453px; padding-left: 7px; }
.coord { width: 64px; padding-left: 7px; }
.field { height: 22px; border: 1px solid #a9a9a9; border-radius: 3px; background: #fff; display: flex; align-items: center; padding-left: 3px; overflow: hidden; flex: none; }
.cval { width: 98px; }
.mouse { width: 16px; height: 16px; margin: 0 12px 0 4px; }
.scala { width: 29px; }
.sval { width: 81px; }
.sval i { margin-left: auto; width: 19px; height: 20px; border-left: 1px solid #b9b9b9; background: #f6f6f6; display: flex; align-items: center; justify-content: center; }
.lock { width: 12px; height: 15px; margin: 0 8px 0 12px; }
.lente { width: 110px; }
.spin i { margin-left: auto; width: 14px; height: 20px; border-left: 1px solid #b9b9b9; background: #f6f6f6; display: flex; flex-direction: column; align-items: center; justify-content: center; gap: 3px; }
.up { border: 4px solid transparent; border-bottom: 4px solid #555; border-top: 0; }
.pale { border-top-color: #999; }
.zval { width: 88px; }
.rot { margin-left: 7px; letter-spacing: -0.8px; }

/* floating plugin window */
.dialog { position: absolute; left: 768px; top: 172px; width: 439px; height: 638px; border: 1px solid #1b1014; border-radius: 7px; box-shadow: inset 0 0 0 1px rgba(255,255,255,.65), 2px 3px 13px 3px rgba(30,0,10,.8); background: linear-gradient(#b5a4a8 0, #c8b7bc 20px, #b5a4a8 90px, #e4d5da 178px, #8d6470 179px, #9a7480 400px, #865763 100%); padding: 0 6px 5px; }
.dtitle { height: 27px; display: flex; align-items: center; font: 12px "Open Sans", "Noto Sans", sans-serif; letter-spacing: -0.15px; margin: 1px -5px 0; padding: 0 6px 0 5px; border-radius: 6px 6px 0 0; background: linear-gradient(90deg, #b9a6aa 0, #b9a9ae 110px, #a0838a 170px, #a98b94 250px, #987880 285px, #a0838b 305px, #c2b0b5 340px, #c0afb4 100%); }
.dtitle > svg { width: 16px; height: 16px; margin-right: 5px; }
.dtitle span { text-shadow: 0 0 6px #fff, 0 0 10px #fff; }
.close { margin: -9px 0 0 auto; width: 47px; height: 19px; padding: 0; border: 1px solid #4e181a; border-top: 0; border-radius: 0 0 4px 4px; background: linear-gradient(#dfa093, #cc7162 45%, #ac2815 50%, #d0604a); box-shadow: inset 0 0 0 1px rgba(255,255,255,.45), 0 0 0 1px rgba(255,255,255,.4); display: flex; align-items: center; justify-content: center; }
.close svg { width: 12px; height: 10px; }
.client { height: 603px; margin-left: -1px; border: 1px solid #4d3b40; box-shadow: 0 0 0 1px rgba(255,255,255,.6); background: #efefef; padding: 11px 11px 11px 11px; display: flex; flex-direction: column; }
.row { height: 22px; display: flex; align-items: center; margin-bottom: 6.500px; flex: none; }
.r24 { height: 24px; margin-bottom: 7.500px; } .r18 { height: 18px; margin-bottom: 5.500px; } .r6 { margin-bottom: 6px; } .r23 { height: 23px; margin-bottom: 5.500px; }
.l1, .l2, .l3, .l4 { margin-left: -1px; }
.l1 { width: 111px; } .l2 { width: 114px; } .l3 { width: 70px; } .l4 { width: 105px; }
.grow { flex: 1; }
.combo { height: 100%; border: 1px solid #a9a9a9; border-radius: 3px; background: linear-gradient(#fdfdfd, #efefef); display: flex; align-items: center; padding: 0 6px 0 5px; }
.combo svg { width: 17px; height: 13px; margin: -4px 2px 0 0; }
.combo .tri { margin: -2px 0 0 auto; }
.disabled { border-color: #c4c4c4; } .disabled .tri { border-top-color: #aaa; }
.grey { margin-left: 4px; color: #7c7c7c; letter-spacing: -0.1px; }
.w157 { width: 157px; padding-left: 2px; }
.res { margin-left: 6px; width: 111px; }
.w59 { width: 59px; margin-left: auto; }
.w66 { width: 66px; margin-left: 7px; }
.path { width: 108px; padding: 0 3px 0 0; justify-content: flex-end; letter-spacing: -0.1px; }
.btn { width: 80px; height: 21px; border: 1px solid #a9a9a9; border-radius: 3px; background: linear-gradient(#fefefe, #efefef); font: inherit; letter-spacing: inherit; color: #000; padding: 0; }
.focus { margin-left: 6px; border-color: #5b9fe6; background: linear-gradient(#fdfdfd, #e9eef4); }
.fmt { margin-left: auto; width: 98px; padding-left: 4px; }
.c2 { margin: 0 4px 0 27px; }
.rem { margin-left: auto; }
.log { flex: 1; background: #fff; border: 1px solid #b1b1b1; }
.combo, .btn { flex-shrink: 0; }
.foot { margin: 6px 0 0; height: 21px; }
.push { margin-left: auto; }
.gap8 { margin-left: 8px; }
```
